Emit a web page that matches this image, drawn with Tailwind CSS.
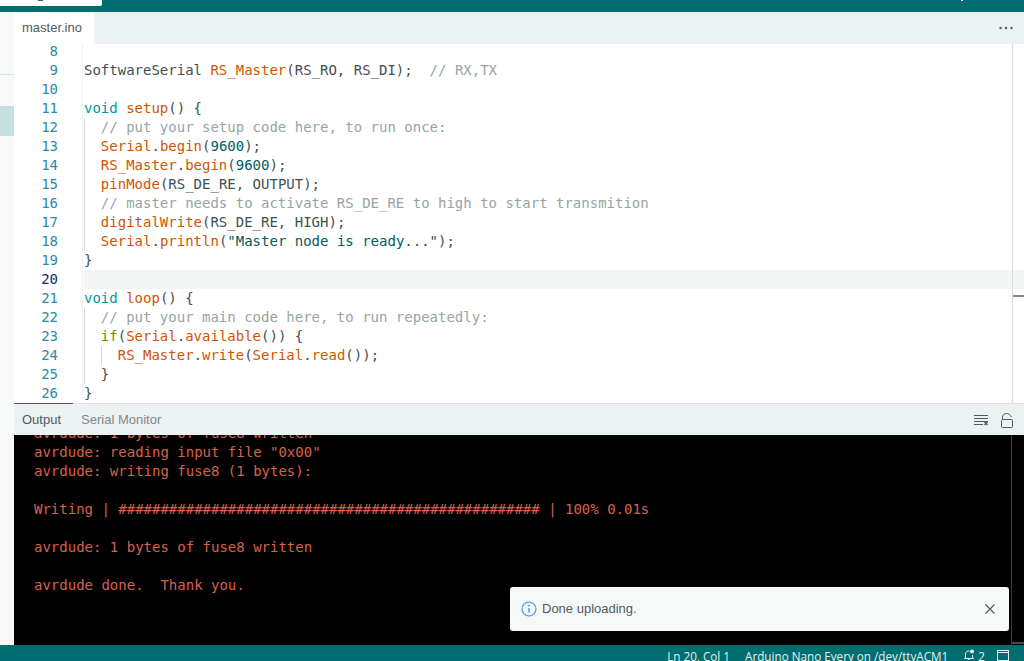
<!DOCTYPE html>
<html lang="en">

<head>
    <meta charset="UTF-8">
    <title>master.ino</title>
    <script src="https://cdn.jsdelivr.net/npm/@tailwindcss/browser@4"></script>
</head>

<body class="relative h-[661px] w-[1024px] overflow-hidden bg-white flex flex-col font-['Liberation_Sans',sans-serif]">

    <!-- top bar -->
    <div class="relative h-[12px] shrink-0 bg-[#006d70] flex">
        <div class="relative h-[6px] w-[102px] rounded-br-[2px] bg-white">
            <div class="absolute left-[38px] top-0 h-[1px] w-[5px] bg-[#4e5b61]"></div>
        </div>
        <div class="absolute left-[961px] top-0 h-[1px] w-[2px] bg-white"></div>
    </div>

    <div class="flex flex-1 min-h-0">
        <!-- side panel -->
        <div class="w-[14px] shrink-0 bg-[#f7f9f9] flex flex-col">
            <div class="h-[63px] border-b border-[#dae3e3]"></div>
            <div class="h-[30px] mt-[31px] bg-[#c5e0e0]"></div>
        </div>

        <div class="flex-1 min-w-0 flex flex-col">
            <!-- tabs -->
            <div class="h-[32px] shrink-0 bg-[#ecf1f1] flex items-center justify-between">
                <div class="h-full w-[80px] bg-white flex items-center pl-[8px] text-[13px] text-[#4e5b61]">master.ino</div>
                <svg class="mr-[11px]" width="14" height="4" viewBox="0 0 14 4" fill="#4e5b61">
                    <circle cx="1.5" cy="2" r="1.2"/><circle cx="7" cy="2" r="1.2"/><circle cx="12.5" cy="2" r="1.2"/>
                </svg>
            </div>

            <!-- editor -->
            <div class="relative h-[359px] shrink-0 overflow-hidden font-['DejaVu_Sans_Mono',monospace] text-[14px] leading-[19px] text-[#434f54]">
                <div class="-mt-[2px] flex">
                    <div class="w-[44px] shrink-0 text-right text-[#2b8aa6]">
                        <div>8</div><div>9</div><div>10</div><div>11</div><div>12</div><div>13</div><div>14</div><div>15</div><div>16</div><div>17</div><div>18</div><div>19</div><div class="text-[#1b2a6b]">20</div><div>21</div><div>22</div><div>23</div><div>24</div><div>25</div><div>26</div>
                    </div>
                    <div class="ml-[26px] flex-1 *:whitespace-pre">
                        <div class="h-[19px]"></div>
                        <div class="h-[19px]">SoftwareSerial <span class="text-[#d35400]">RS_Master</span>(RS_RO, RS_DI);  <span class="text-[#95a5a6]">// RX,TX</span></div>
                        <div class="h-[19px]"></div>
                        <div class="h-[19px]"><span class="text-[#00979d]">void</span> <span class="text-[#d35400]">setup</span>() {</div>
                        <div class="h-[19px] text-[#95a5a6]">  // put your setup code here, to run once:</div>
                        <div class="h-[19px]">  <span class="text-[#d35400]">Serial</span>.<span class="text-[#d35400]">begin</span>(<span class="text-[#005c5f]">9600</span>);</div>
                        <div class="h-[19px]">  <span class="text-[#d35400]">RS_Master</span>.<span class="text-[#d35400]">begin</span>(<span class="text-[#005c5f]">9600</span>);</div>
                        <div class="h-[19px]">  <span class="text-[#d35400]">pinMode</span>(RS_DE_RE, OUTPUT);</div>
                        <div class="h-[19px] text-[#95a5a6]">  // master needs to activate RS_DE_RE to high to start transmition</div>
                        <div class="h-[19px]">  <span class="text-[#d35400]">digitalWrite</span>(RS_DE_RE, HIGH);</div>
                        <div class="h-[19px]">  <span class="text-[#d35400]">Serial</span>.<span class="text-[#d35400]">println</span>(<span class="text-[#005c5f]">"Master node is ready..."</span>);</div>
                        <div class="h-[19px]">}</div>
                        <div class="h-[19px] bg-[#f3f5f5]"></div>
                        <div class="h-[19px]"><span class="text-[#00979d]">void</span> <span class="text-[#d35400]">loop</span>() {</div>
                        <div class="h-[19px] text-[#95a5a6]">  // put your main code here, to run repeatedly:</div>
                        <div class="h-[19px]">  <span class="text-[#728e00]">if</span>(<span class="text-[#d35400]">Serial</span>.<span class="text-[#d35400]">available</span>()) {</div>
                        <div class="h-[19px]">    <span class="text-[#d35400]">RS_Master</span>.<span class="text-[#d35400]">write</span>(<span class="text-[#d35400]">Serial</span>.<span class="text-[#d35400]">read</span>());</div>
                        <div class="h-[19px]">  }</div>
                        <div class="h-[19px]">}</div>
                    </div>
                </div>
                <!-- gutter edge and indent guides -->
                <div class="absolute left-[68px] top-0 h-full w-px bg-[#f1f3f3]"></div>
                <div class="absolute left-[70px] top-[74px] h-[133px] w-px bg-[#d3d8d9]"></div>
                <div class="absolute left-[70px] top-[264px] h-[76px] w-px bg-[#d3d8d9]"></div>
                <div class="absolute left-[87px] top-[302px] h-[19px] w-px bg-[#d3d8d9]"></div>
                <!-- overview ruler -->
                <div class="absolute left-[998px] top-0 h-full w-px bg-[#d9dcdc]"></div>
                <div class="absolute left-[999px] top-[251px] h-[2px] w-[11px] bg-[#7f8b8c]"></div>
            </div>

            <!-- output panel -->
            <div class="h-[32px] shrink-0 bg-[#ecf1f1] border-t border-[#dae3e3] relative flex items-center text-[13px]">
                <div class="absolute left-0 -top-px h-px w-[59px] bg-[#4e5b61]"></div>
                <span class="ml-[8px] text-[#4e5b61]">Output</span>
                <span class="ml-[20px] text-[#7f8b8c]">Serial Monitor</span>
                <svg class="ml-auto mt-[1px]" width="16" height="12" viewBox="0 0 16 12" fill="none" stroke="#4e5b61">
                    <path d="M1 1.5h14M1 4.5h14M1 7.5h14M1 10.5h9"/>
                    <path d="M11.5 8l3 3M14.5 8l-3 3" stroke-width="1.4"/>
                </svg>
                <svg class="ml-[11px] mr-[10px] mt-[1px]" width="14" height="16" viewBox="0 0 14 16" fill="none" stroke="#4e5b61">
                    <rect x="1.5" y="7.5" width="11" height="8" rx="1"/>
                    <path d="M2.500 7V5C2.500 3 4 1.500 6.500 1.500C8.500 1.500 10 2.500 11.500 5"/>
                </svg>
            </div>

            <div class="relative flex-1 min-h-0 overflow-hidden bg-black font-['DejaVu_Sans_Mono',monospace] text-[14px] leading-[19px] text-[#d9604c]">
                <div class="-mt-[11px] pl-[20px] *:whitespace-pre">
                    <div class="h-[19px]">avrdude: 1 bytes of fuse8 written</div>
                    <div class="h-[19px]">avrdude: reading input file "0x00"</div>
                    <div class="h-[19px]">avrdude: writing fuse8 (1 bytes):</div>
                    <div class="h-[19px]"></div>
                    <div class="h-[19px]">Writing | ################################################## | 100% 0.01s</div>
                    <div class="h-[19px]"></div>
                    <div class="h-[19px]">avrdude: 1 bytes of fuse8 written</div>
                    <div class="h-[19px]"></div>
                    <div class="h-[19px]">avrdude done.  Thank you.</div>
                </div>
                <div class="absolute left-[997px] top-0 h-full w-px bg-[#3a3a3a]"></div>
                <div class="absolute left-[998px] bottom-[1px] h-[2px] w-[12px] bg-[#4a4a4a]"></div>
            </div>
        </div>
    </div>

    <!-- status bar -->
    <div class="h-[16px] shrink-0 overflow-hidden bg-[#006d70] font-['Open_Sans',sans-serif] text-[11.7px] leading-[16px] text-[#e4f0f0] flex items-start justify-end">
        <span class="mt-[3px]">Ln 20, Col 1</span>
        <span class="mt-[3px] ml-[15px]">Arduino Nano Every on /dev/ttyACM1</span>
        <svg class="mt-[4px] ml-[15px]" width="12" height="12" viewBox="0 0 12 12" fill="none" stroke="#e4f0f0">
            <path d="M1 9.500h10M2.500 9.500V5a3 3 0 0 1 4-2.800M9.500 6v3.500M5 9.500a1 1 0 0 0 2 0"/>
            <circle cx="9" cy="2.500" r="2" fill="#e4f0f0" stroke="none"/>
        </svg>
        <span class="mt-[3px] ml-[3px]">2</span>
        <svg class="mt-[5px] ml-[12px] mr-[15px]" width="12" height="11" viewBox="0 0 12 11" fill="none" stroke="#e4f0f0">
            <rect x="0.500" y="0.500" width="11" height="10"/><path d="M0.500 2.500h11"/>
        </svg>
    </div>

    <!-- notification -->
    <div class="absolute left-[510px] top-[587px] flex h-[44px] w-[499px] items-center rounded-[3px] bg-[#f7f9f9] text-[13px] text-[#4e5b61]">
        <svg class="ml-[11px]" width="16" height="16" viewBox="0 0 16 16" fill="none" stroke="#3794ff" stroke-width="1.100">
            <circle cx="8" cy="8" r="7"/>
            <path d="M8 7v4.500" stroke-width="1.400"/>
            <circle cx="8" cy="4.700" r="0.900" fill="#3794ff" stroke="none"/>
        </svg>
        <span class="ml-[5px]">Done uploading.</span>
        <svg class="ml-auto mr-[13px]" width="12" height="12" viewBox="0 0 12 12" fill="none" stroke="#4e5b61" stroke-width="1.100">
            <path d="M1.500 1.500l9 9M10.500 1.500l-9 9"/>
        </svg>
    </div>

</body>

</html>
